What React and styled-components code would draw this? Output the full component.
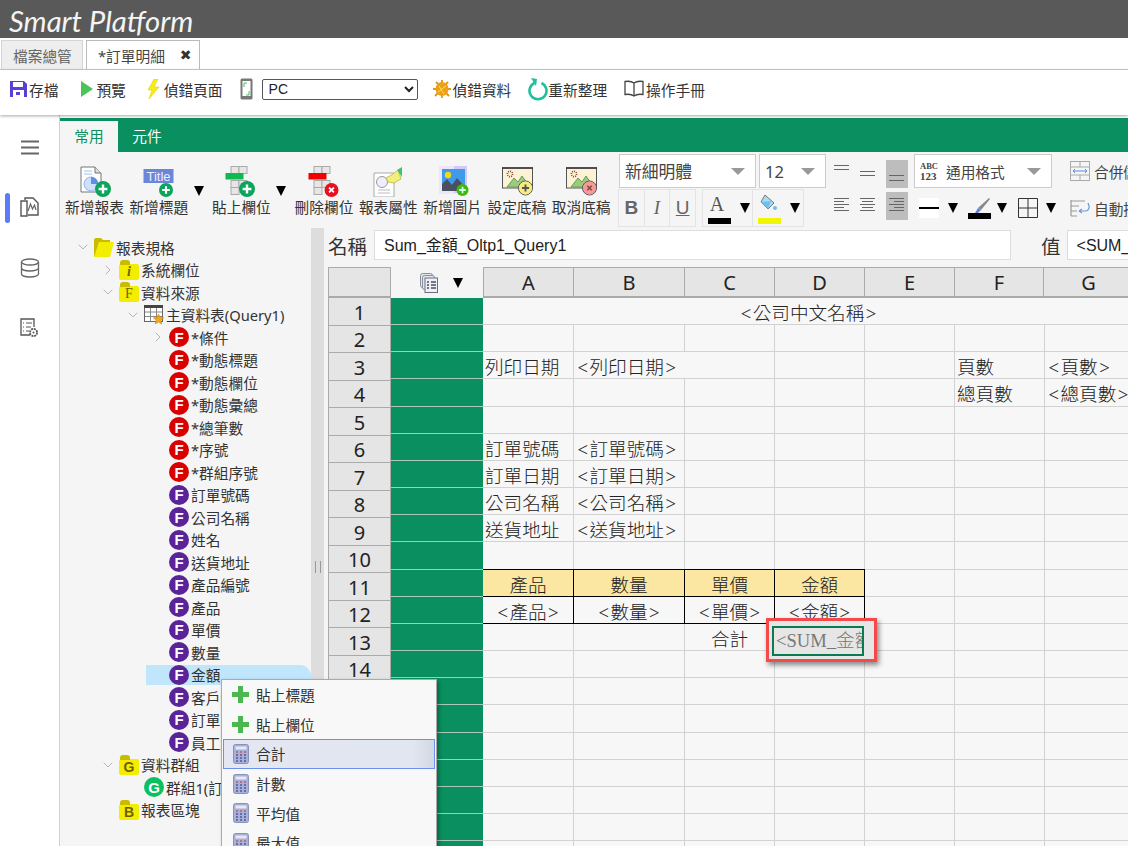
import React from "react";
import styled, { createGlobalStyle } from "styled-components";
import { ChevronDown, ChevronRight } from "lucide-react";

const UI_FONT = `"Noto Sans", "Noto Sans CJK TC", sans-serif`;
const CELL_FONT = `"Liberation Serif", "Noto Sans CJK TC", serif`;
const GREEN = "#0a9060";

const GlobalStyle = createGlobalStyle`
  html, body { margin: 0; padding: 0; background: #fff; }
  body { font-family: ${UI_FONT}; color: #222; }
  * { box-sizing: border-box; }
`;

const Page = styled.div`
  width: 1128px;
  height: 846px;
  display: flex;
  flex-direction: column;
  overflow: hidden;
`;

const Header = styled.div`
  height: 38px;
  flex: none;
  background: #595959;
  padding-left: 9px;
  color: #f4f4f4;
  font: italic 400 29.3px/41px "Lato", sans-serif;
`;

const TabBar = styled.div`
  height: 32px;
  flex: none;
  display: flex;
  align-items: flex-end;
  gap: 3px;
  padding: 0 0 0 1px;
  border-bottom: 1px solid #ccc;
`;

const FileTab = styled.div`
  height: 29px;
  width: ${(p) => p.$w}px;
  display: flex;
  align-items: center;
  padding-left: 11px;
  font-size: 14.7px;
  color: ${(p) => (p.$active ? "#444" : "#666")};
  background: ${(p) => (p.$active ? "#fff" : "#eee")};
  border: 1px solid ${(p) => (p.$active ? "#bbb" : "#d4d4d4")};
  border-bottom: 0;
`;

const CloseMark = styled.span`
  margin-left: 15px;
  font-size: 14px;
  color: #333;
  font-family: "DejaVu Sans", sans-serif;
`;

const Toolbar = styled.div`
  height: 45px;
  flex: none;
  display: flex;
  align-items: center;
  padding: 0 0 7px 10px;
  background: #fff;
  box-shadow: 0 1px 3px rgba(0, 0, 0, 0.35);
  position: relative;
  z-index: 2;
`;

const ToolButton = styled.div`
  display: flex;
  align-items: center;
  gap: ${(p) => p.$gap ?? 2}px;
  margin-left: ${(p) => p.$ml ?? 0}px;
  font-size: 14.7px;
  color: #333;
  white-space: nowrap;
`;

const DeviceSelect = styled.select`
  width: 156px;
  height: 21px;
  margin-left: 9px;
  border: 1px solid #555;
  border-radius: 2px;
  background: #fff;
  padding-left: 2px;
  font: 14px "Liberation Sans", sans-serif;
  color: #222;
`;

const Body = styled.div`
  flex: 1;
  min-height: 0;
  display: flex;
  position: relative;
  overflow: hidden;
`;

const Rail = styled.div`
  width: 60px;
  flex: none;
  border-right: 1px solid #d0d0d0;
  background: #fff;
  display: flex;
  flex-direction: column;
  align-items: center;
  padding: 25px 0 0 0;
  position: relative;
`;

const RailSlot = styled.div`
  width: 59px;
  height: ${(p) => p.$h}px;
  display: flex;
  justify-content: center;
  padding-left: ${(p) => p.$pl ?? 0}px;
  position: relative;
`;

const RailMarker = styled.div`
  position: absolute;
  left: 5px;
  top: -4px;
  width: 5px;
  height: 30px;
  border-radius: 3px;
  background: #5b7cfa;
`;

const Main = styled.div`
  flex: 1;
  min-width: 0;
  display: flex;
  flex-direction: column;
  padding-top: 3px;
  background: #fff;
`;

const RibbonTabs = styled.div`
  height: 34px;
  flex: none;
  display: flex;
  align-items: flex-end;
  background: ${GREEN};
`;

const RibbonTab = styled.div`
  width: 58px;
  height: 31px;
  display: flex;
  align-items: center;
  justify-content: center;
  padding-bottom: 2px;
  font-size: 14.7px;
  color: ${(p) => (p.$active ? GREEN : "#fff")};
  background: ${(p) => (p.$active ? "#f5f5f5" : "transparent")};
`;

const Ribbon = styled.div`
  height: 77px;
  flex: none;
  display: flex;
  gap: 5.3px;
  padding-left: 5px;
  background: #f5f5f5;
  overflow: hidden;
`;

const BigButton = styled.div`
  width: 59px;
  flex: none;
  display: flex;
  flex-direction: column;
  align-items: center;
  padding-top: 13px;
  font-size: 14.7px;
  line-height: 20px;
  white-space: nowrap;
  color: #333;
  svg { display: block; height: 32px; }
`;

const Caret = styled.span`
  flex: none;
  display: inline-block;
  width: 0;
  height: 0;
  border-left: 5px solid transparent;
  border-right: 5px solid transparent;
  border-top: 10px solid #000;
  margin-top: ${(p) => p.$mt ?? 0}px;
  margin-left: ${(p) => p.$ml ?? 0}px;
  margin-right: ${(p) => p.$mr ?? 0}px;
`;

const FormatPanel = styled.div`
  flex: none;
  margin-left: 2px;
  padding-top: 2px;
  display: flex;
  flex-direction: column;
  gap: 1px;
`;

const FormatRow = styled.div`
  height: ${(p) => p.$h}px;
  display: flex;
  align-items: center;
`;

const Combo = styled.div`
  width: ${(p) => p.$w}px;
  height: 34px;
  margin-left: ${(p) => p.$ml ?? 0}px;
  flex: none;
  display: flex;
  align-items: center;
  padding: 0 10px 0 5px;
  gap: 8px;
  background: #fff;
  border: 1px solid #ccc;
  font-size: ${(p) => p.$size ?? 14.7}px;
  color: #444;
`;

const ComboArrow = styled.span`
  margin-left: auto;
  width: 0;
  height: 0;
  border-left: 7px solid transparent;
  border-right: 7px solid transparent;
  border-top: 7px solid #999;
`;

const AlignGroup = styled.div`
  width: 74px;
  margin-left: ${(p) => p.$ml ?? 0}px;
  margin-top: ${(p) => p.$mt ?? 0}px;
  flex: none;
  display: flex;
  align-items: center;
  justify-content: space-between;
`;

const AlignButton = styled.div`
  width: ${(p) => (p.$on ? 22 : 16)}px;
  height: 28px;
  display: flex;
  align-items: center;
  justify-content: center;
  background: ${(p) => (p.$on ? "#bdbdbd" : "transparent")};
`;

const StyleGroup = styled.div`
  display: flex;
  height: 38px;
  flex: none;
  width: ${(p) => p.$w}px;
  margin-left: ${(p) => p.$ml ?? 0}px;
  border: 1px solid #e4e4e4;
`;

const StyleButton = styled.div`
  flex: 1;
  display: flex;
  align-items: center;
  justify-content: ${(p) => (p.$split ? "flex-start" : "center")};
  padding-left: ${(p) => (p.$split ? 5 : 0)}px;
  border-left: ${(p) => (p.$first ? "0" : "1px solid #e4e4e4")};
  color: #666;
  font-size: 19px;
  font-family: ${(p) => (p.$italic ? `"Liberation Serif", serif` : `"Liberation Sans", sans-serif`)};
  font-weight: ${(p) => (p.$bold ? 700 : 400)};
  font-style: ${(p) => (p.$italic ? "italic" : "normal")};
  text-decoration: ${(p) => (p.$under ? "underline" : "none")};
`;

const Swatch = styled.div`
  position: relative;
  width: 24px;
  height: 30px;
  margin-top: 2px;
  flex: none;
  &::after {
    content: "";
    position: absolute;
    left: 0;
    bottom: 0;
    width: 23px;
    height: 6px;
    background: ${(p) => p.$color};
  }
`;

const SwatchLetter = styled.span`
  display: block;
  text-align: center;
  width: 18px;
  margin-top: -2px;
  font: 20px/24px "Liberation Serif", serif;
  color: #555;
`;

const SideAction = styled.div`
  display: flex;
  align-items: center;
  gap: 4px;
  margin-left: ${(p) => p.$ml}px;
  font-size: 14.7px;
  white-space: nowrap;
  color: #444;
`;

const Workspace = styled.div`
  flex: 1;
  min-height: 0;
  display: flex;
  background: #f5f5f5;
`;

const Tree = styled.div`
  width: 251px;
  flex: none;
  padding-top: 7px;
  overflow: hidden;
`;

const TreeRow = styled.div`
  height: 22.5px;
  display: flex;
  align-items: center;
  margin-left: ${(p) => 11 + p.$level * 25}px;
  font-size: 14.7px;
  color: #333;
  white-space: nowrap;
  position: relative;
  &::before {
    content: "";
    display: ${(p) => (p.$selected ? "block" : "none")};
    position: absolute;
    left: 0;
    right: 0;
    top: 1px;
    bottom: 1px;
    background: #c0e6fb;
    border-top-right-radius: 11px;
  }
`;

const TreeToggle = styled.span`
  width: 23px;
  flex: none;
  display: flex;
  justify-content: center;
  color: #aaa;
  position: relative;
`;

const TreeLabel = styled.span`
  margin-left: 2px;
  position: relative;
`;

const Dot = styled.span`
  width: 20px;
  height: 20px;
  flex: none;
  border-radius: 50%;
  background: ${(p) => p.$color};
  color: #fff;
  display: flex;
  align-items: center;
  justify-content: center;
  font: 700 15px "Liberation Sans", sans-serif;
  position: relative;
`;

const Folder = styled.span`
  width: 20px;
  height: 16px;
  margin-top: 4px;
  flex: none;
  position: relative;
  border-radius: 2px;
  background: #f3ee00;
  color: #6e6000;
  display: flex;
  align-items: center;
  justify-content: center;
  font: ${(p) => (p.$serif ? `${p.$italic ? "italic 700" : "400"} 14px "Liberation Serif", serif` : `700 14px "Liberation Sans", sans-serif`)};
  &::before {
    content: "";
    position: absolute;
    left: 1px;
    top: -4px;
    width: 10px;
    height: 5px;
    border-radius: 3px 3px 0 0;
    background: #c9bb00;
  }
`;

const Splitter = styled.div`
  width: 13px;
  flex: none;
  margin-top: -1px;
  background: #ddd;
  padding: 333px 0 0 4px;
`;

const Grip = styled.div`
  width: 6px;
  height: 12px;
  border-left: 1px solid #999;
  border-right: 1px solid #999;
`;

const Content = styled.div`
  flex: 1;
  min-width: 0;
  padding: 1px 0 0 4px;
  display: flex;
  flex-direction: column;
  overflow: hidden;
`;

const NameRow = styled.div`
  height: 30px;
  flex: none;
  display: flex;
  align-items: center;
  font-size: 19.5px;
  color: #333;
`;

const FieldInput = styled.div`
  height: 30px;
  width: ${(p) => p.$w}px;
  margin-left: ${(p) => p.$ml}px;
  flex: none;
  display: flex;
  align-items: center;
  padding: 0 0 2px 9px;
  background: #fff;
  border: 1px solid #ddd;
  font: 16px "Liberation Sans", "Noto Sans CJK TC", sans-serif;
  color: #222;
  white-space: nowrap;
  overflow: hidden;
`;

const FieldLabel = styled.span`
  margin-left: ${(p) => p.$ml ?? 0}px;
  white-space: nowrap;
`;

const SheetArea = styled.div`
  margin-top: 7px;
  display: flex;
  flex: 1;
  min-height: 0;
`;

const RowHeads = styled.div`
  width: 63px;
  flex: none;
`;

const Corner = styled.div`
  height: 31px;
  background: #e5e5e5;
  border: 1px solid #aaa;
  border-bottom-width: 2px;
`;

const RowHead = styled.div`
  height: 27.5px;
  display: flex;
  align-items: center;
  justify-content: center;
  padding-top: 2px;
  background: #e5e5e5;
  border: 1px solid #aaa;
  border-top: 0;
  font-size: 20px;
  color: #222;
`;

const BandColumn = styled.div`
  width: 92px;
  flex: none;
`;

const BandHead = styled.div`
  height: 31px;
  display: flex;
  align-items: center;
  padding-left: 29px;
  gap: 15px;
`;

const BandCell = styled.div`
  height: 27.17px;
  background: ${GREEN};
  border-bottom: 1px solid #a9c9b9;
`;

const SheetColumn = styled.div`
  flex: 1;
  min-width: 0;
  position: relative;
  overflow: hidden;
`;

const ColHeads = styled.div`
  height: 31px;
  display: grid;
  grid-template-columns: 91px 111px 90px 90px 90px 89px 90px;
  width: 660px;
`;

const ColHead = styled.div`
  display: flex;
  align-items: center;
  justify-content: center;
  background: #e5e5e5;
  border-top: 1px solid #aaa;
  border-right: 1px solid #aaa;
  border-bottom: 2px solid #aaa;
  border-left: ${(p) => (p.$first ? "1px solid #aaa" : "0")};
  font-size: 20px;
  color: #222;
`;

const SheetGrid = styled.div`
  display: grid;
  grid-template-columns: 91px 111px 90px 90px 90px 90px 90px;
  grid-auto-rows: 27.17px;
  width: 662px;
  background: #f7f7f7;
  font: 300 18.6px/24px ${CELL_FONT};
  color: #222;
`;

const Cell = styled.div`
  grid-column: span ${(p) => p.$span ?? 1};
  padding: 4px 2px 0;
  text-align: ${(p) => p.$align ?? "left"};
  white-space: nowrap;
  overflow: hidden;
  border-right: 1px solid #d2d2d2;
  border-bottom: 1px solid #d2d2d2;
`;

const BoxedCell = styled(Cell)`
  text-align: center;
  background: ${(p) => p.$fill ?? "transparent"};
  border-right-color: #000;
  border-bottom-color: #000;
  box-shadow: -1px 0 0 #000, 0 -1px 0 #000;
`;

const Angle = styled.span`
  margin: 0 1.5px;
`;

const Callout = styled.div`
  position: absolute;
  left: 283px;
  top: 351px;
  width: 111px;
  height: 44px;
  padding: 5px 0 0 3px;
  background: #e6e6e6;
  border: 3px solid #f54a4a;
  box-shadow: 2px 3px 5px rgba(0, 0, 0, 0.45);
`;

const ActiveCell = styled.div`
  width: 92px;
  height: 30px;
  padding-left: 2px;
  border: 2px solid #0b7a50;
  overflow: hidden;
  white-space: nowrap;
  font: 300 18.6px/25px ${CELL_FONT};
  color: #777;
`;

const ContextMenu = styled.div`
  position: absolute;
  left: 221px;
  top: 564px;
  width: 216px;
  height: 320px;
  padding: 0 1px;
  background: #f8f8f8;
  border: 1px solid #aaa;
  box-shadow: 2px 2px 4px rgba(0, 0, 0, 0.3);
  z-index: 3;
`;

const MenuItem = styled.div`
  height: 29.6px;
  display: flex;
  align-items: center;
  gap: 7px;
  padding-left: 8px;
  font-size: 14.7px;
  color: #333;
  border: 1px solid ${(p) => (p.$active ? "#6c8ff0" : "transparent")};
  background: ${(p) =>
    p.$active ? "linear-gradient(90deg, #e4e7f1, #e2e6f0 90%, #d4d8e4)" : "transparent"};
`;

const MenuIconBox = styled.span`
  width: 17px;
  flex: none;
  display: flex;
  justify-content: center;
`;

const Badge = ({ cx, cy, r, fill, mark = "plus", color = "#fff" }) => (
  <g>
    <circle cx={cx} cy={cy} r={r} fill={fill} />
    {mark === "plus" ? (
      <path
        d={`M${cx - r * 0.55} ${cy}H${cx + r * 0.55}M${cx} ${cy - r * 0.55}V${cy + r * 0.55}`}
        stroke={color}
        strokeWidth={r * 0.3}
      />
    ) : (
      <path
        d={`M${cx - r * 0.35} ${cy - r * 0.35}L${cx + r * 0.35} ${cy + r * 0.35}M${cx + r * 0.35} ${cy - r * 0.35}L${cx - r * 0.35} ${cy + r * 0.35}`}
        stroke={color}
        strokeWidth={r * 0.25}
      />
    )}
  </g>
);

const Svg = ({ w = 36, h = 32, children }) => (
  <svg width={w} height={h} viewBox={`0 0 ${w} ${h}`} fill="none">
    {children}
  </svg>
);

const ReportIcon = () => (
  <Svg>
    <path d="M4 2h14l6 6v19H4z" fill="#fff" stroke="#777" />
    <path d="M18 2v6h6" stroke="#777" fill="#ddd" />
    <path d="M7 6h8M7 9h8" stroke="#9ec2f0" />
    <circle cx="14" cy="19" r="7" fill="#cfe0fa" stroke="#8fb2ea" />
    <path d="M14 19v-7a7 7 0 0 1 7 7z" fill="#5b8fe8" />
    <Badge cx={26} cy={24} r={8} fill="#0aa55a" />
  </Svg>
);

const TitleIcon = () => (
  <Svg>
    <rect x="2.5" y="4" width="30" height="14" fill="#6a86d8" />
    <text x="17.5" y="16" textAnchor="middle" fill="#eef" fontSize="13" fontFamily="Liberation Sans">
      Title
    </text>
    <Badge cx={25} cy={25} r={7} fill="#0aa55a" />
  </Svg>
);

const ColumnIcon = ({ bar, badge, mark, r = 8, cx = 24, cy = 24 }) => (
  <Svg>
    <g stroke="#aaa" fill="#e6e6e6">
      <rect x="8" y="1.5" width="8" height="7" />
      <rect x="16" y="1.5" width="8" height="7" />
      <rect x="8" y="15.5" width="8" height="7" />
      <rect x="8" y="22.5" width="8" height="7" />
      <rect x="16" y="15.5" width="8" height="7" />
    </g>
    <rect x="2.5" y="8" width="18" height="6.5" fill={bar} />
    <Badge cx={cx} cy={cy} r={r} fill={badge} mark={mark} />
  </Svg>
);

const PropsIcon = () => (
  <Svg>
    <path d="M4 8h20v24H4z" fill="#fff" stroke="#aaa" />
    <circle cx="12" cy="17" r="5.5" fill="#eef" stroke="#999" />
    <path d="M8 25h12M8 28h12" stroke="#bbb" />
    <path d="M16 13l7-4 5-4 3 9-7 4-6-1z" fill="#f2ee7c" stroke="#b6ac3c" strokeWidth=".7" />
    <path d="M27 5l5-3v10z" fill="#3fc46a" />
  </Svg>
);

const PictureIcon = () => (
  <Svg>
    <rect x="4" y="1" width="28" height="28" fill="#ece6fc" />
    <rect x="19" y="1" width="13" height="27" fill="#d2c8fa" />
    <rect x="7" y="4" width="23" height="22" fill="#3f9bea" />
    <circle cx="13" cy="10" r="3.2" fill="#f5d90a" />
    <path d="M7 26v-7l5-5 5 6 5-7 8 9v4z" fill="#4a5060" />
    <Badge cx={27.5} cy={25} r={6} fill="#42b80e" color="#cfe" />
  </Svg>
);

const DraftIcon = ({ fill, mark, color }) => (
  <Svg>
    <rect x="3.5" y="3" width="30" height="20" fill="#fdf1d6" stroke="#555" />
    <path d="M3 3h31" stroke="#333" strokeWidth="1.5" />
    <path d="M8 22l7-9 4 4 4-6 8 11z" fill="#9ccb7c" stroke="#6d9a58" />
    <circle cx="11" cy="9" r="2.6" stroke="#8a4a3c" strokeWidth="1.6" strokeDasharray="1 1" />
    <circle cx="26.5" cy="23" r="7" fill={fill} stroke="#555" />
    <Badge cx={26.5} cy={23} r={6.4} fill={fill} mark={mark} color={color} />
  </Svg>
);

const SaveIcon = () => (
  <Svg w={17} h={18}>
    <path d="M0 1h14l3 3v13H0z" fill="#5a3fd6" />
    <rect x="3" y="2" width="10" height="5" fill="#fff" />
    <rect x="3" y="10" width="11" height="7" fill="#fff" />
    <rect x="6" y="12" width="4" height="3" fill="#5a3fd6" />
  </Svg>
);

const PlayIcon = () => (
  <Svg w={12} h={18}>
    <path d="M0 1l12 8-12 8z" fill="#4cc25a" />
  </Svg>
);

const BoltIcon = () => (
  <Svg w={13} h={20}>
    <path d="M7 0L1 11h4L2 20l10-12H7l4-8z" fill="#f7ec13" stroke="#d9c900" strokeWidth=".5" />
  </Svg>
);

const DeviceIcon = () => (
  <Svg w={13} h={22}>
    <rect x="0.5" y="0.5" width="12" height="21" rx="1.5" fill="#777" />
    <rect x="2.5" y="3" width="8" height="15" fill="#fff" />
    <path d="M4 9V5h3M9 13v4H6" stroke="#46c05a" />
  </Svg>
);

const BugIcon = () => (
  <Svg w={18} h={20}>
    <path
      d="M9 1v3M3 3l3 3M15 3l-3 3M0 10h3M15 10h3M2 17l3-3M16 17l-3-3M9 16v3"
      stroke="#e09810"
      strokeWidth="1.8"
    />
    <ellipse cx="9" cy="10" rx="6.5" ry="7" fill="#ee9f18" />
    <path d="M5 13l8-6M6 7l5 8" stroke="#fbe15a" />
  </Svg>
);

const RefreshIcon = () => (
  <Svg w={20} h={24}>
    <path d="M6.5 6a8.5 8.5 0 1 0 7 0" stroke="#1fbf9f" strokeWidth="2.6" />
    <path d="M3 1l6 1-1 7z" fill="#1fbf9f" />
  </Svg>
);

const BookIcon = () => (
  <Svg w={20} h={18}>
    <path d="M10 3C8 1.5 4 1 1 1.5v13c3-.5 7 0 9 1.5 2-1.5 6-2 9-1.5v-13C16 1 12 1.5 10 3zM10 3v13" stroke="#444" strokeWidth="1.3" />
  </Svg>
);

const RailReport = () => (
  <Svg w={20} h={20}>
    <path d="M5 3V1h8l5 5v12H8" fill="#fff" stroke="#555" strokeWidth="1.4" />
    <path d="M1 4h6v15H1z" fill="#fff" stroke="#555" strokeWidth="1.4" />
    <path d="M8 14l2.5-7 2 5 2-4 1.5 5" stroke="#666" strokeWidth="1.2" />
  </Svg>
);

const RailData = () => (
  <Svg w={20} h={20}>
    <ellipse cx="10" cy="4" rx="8.5" ry="3" stroke="#666" strokeWidth="1.3" />
    <path d="M1.5 4v12c0 1.7 3.8 3 8.5 3s8.5-1.3 8.5-3V4M1.5 10c0 1.7 3.8 3 8.5 3s8.5-1.3 8.5-3" stroke="#666" strokeWidth="1.3" />
  </Svg>
);

const RailConfig = () => (
  <Svg w={19} h={20}>
    <path d="M10 17H1V1h13v8" stroke="#555" strokeWidth="1.3" />
    <path d="M3 5h1M6 5h6M3 9h1M6 9h5M3 13h1M6 13h3" stroke="#555" />
    <circle cx="13.5" cy="14.5" r="3.6" stroke="#555" strokeWidth="1.8" strokeDasharray="2 .8" />
    <circle cx="13.5" cy="14.5" r="1" fill="#555" />
  </Svg>
);

const MenuBars = () => (
  <Svg w={18} h={15}>
    <path d="M0 1.5h18M0 7.5h18M0 13.5h18" stroke="#666" strokeWidth="2.2" />
  </Svg>
);

const LineStack = ({ lines, w = 16, h = 18 }) => (
  <Svg w={w} h={h}>
    {lines.map(([y, x1, x2]) => (
      <path key={y} d={`M${x1} ${y}.5H${x2}`} stroke="#666" />
    ))}
  </Svg>
);

const ALIGN_LEFT = [[1, 0, 15], [4, 0, 10], [7, 0, 15], [10, 0, 10], [13, 0, 15]];
const ALIGN_CENTER = [[1, 0, 15], [4, 2, 13], [7, 0, 15], [10, 2, 13], [13, 0, 15]];
const ALIGN_RIGHT = [[1, 0, 15], [4, 5, 15], [7, 0, 15], [10, 5, 15], [13, 0, 15]];

const NumberFormatIcon = () => (
  <Svg w={18} h={22}>
    <text x="0" y="9" fontSize="8.5" fontWeight="700" fontFamily="Liberation Serif" fill="#444">
      ABC
    </text>
    <text x="0" y="20" fontSize="11" fontWeight="700" fontFamily="Liberation Serif" fill="#444">
      123
    </text>
  </Svg>
);

const MergeIcon = () => (
  <Svg w={20} h={20}>
    <rect x="0.5" y="0.5" width="19" height="19" fill="#f5f5f5" stroke="#aaa" />
    <path d="M1 6h18M1 14h18M10 1v5M10 14v5" stroke="#aaa" />
    <path d="M3 10h14M3 10l2-2M3 10l2 2M17 10l-2-2M17 10l-2 2" stroke="#5a8fd8" />
  </Svg>
);

const WrapIcon = () => (
  <Svg w={20} h={18}>
    <path d="M1 2h14M1 7h8M1 12h6M1 17h6M1 1v16" stroke="#999" strokeWidth="1.2" />
    <path d="M9 12h6a4 4 0 0 0 4-5l-1-3M9 12l3-2M9 12l3 2" stroke="#6a9ad8" strokeWidth="1.2" />
  </Svg>
);

const FillIcon = () => (
  <Svg w={20} h={18}>
    <path d="M7 1l9 8-6 6-7-7z" fill="#a8dcf6" stroke="#777" />
    <path d="M3 8l10-1-3 8z" fill="#6cc0ee" />
    <circle cx="17" cy="14" r="2" fill="#6cc0ee" />
  </Svg>
);

const BorderLineIcon = () => (
  <Svg w={20} h={20}>
    <rect width="20" height="20" fill="#fff" />
    <path d="M0 10h20" stroke="#000" strokeWidth="2" />
  </Svg>
);

const PenIcon = () => (
  <Svg w={23} h={21}>
    <path d="M21 0l1 1-9 11-3-2z" fill="#888" />
    <path d="M10 10l3 2-3 3H7z" fill="#5a86d8" />
    <rect y="15" width="23" height="6" fill="#000" />
  </Svg>
);

const GridIcon = () => (
  <Svg w={20} h={20}>
    <path d="M.5.5h19v19H.5zM10 1v18M1 10h18" stroke="#333" />
  </Svg>
);

const SheetsIcon = () => (
  <Svg w={18} h={20}>
    <rect x="0.5" y="0.5" width="12" height="14" rx="2" fill="#e4e6ee" stroke="#8a8e9e" />
    <rect x="2.5" y="2.5" width="12" height="14" rx="2" fill="#e4e6ee" stroke="#8a8e9e" />
    <rect x="5" y="5" width="12.5" height="14.5" fill="#eef0f6" stroke="#6a6e80" />
    <path d="M7 9h2M11 9h5M7 12h2M11 12h5M7 15h2M11 15h5" stroke="#4a4e60" strokeWidth="1.4" />
  </Svg>
);

const OpenFolderIcon = () => (
  <Svg w={20} h={20}>
    <path d="M0 3a2 2 0 0 1 2-2h5l2 2h7v3H5L2 19H0z" fill="#c9bb00" />
    <path d="M5 5h15l-4 15H0z" fill="#f3ee00" />
  </Svg>
);

const TableIcon = () => (
  <Svg w={20} h={20}>
    <rect x="0.5" y="0.5" width="18" height="16" fill="#fff" stroke="#666" />
    <rect x="0" y="0" width="19" height="3" fill="#444" />
    <path d="M6.5 3v13M12.5 3v13M1 7h17M1 11.500h17" stroke="#888" />
    <path d="M14.500 9l1.600 3.400 3.600.4-2.700 2.500.8 3.700-3.300-1.900-3.300 1.900.8-3.700-2.700-2.500 3.600-.4z" fill="#f0a81c" stroke="#b47a10" strokeWidth=".5" />
  </Svg>
);

const PlusIcon = () => (
  <Svg w={17} h={17}>
    <path d="M6 0h5v6h6v5h-6v6H6v-6H0V6h6z" fill="#4ab84e" />
  </Svg>
);

const CalcIcon = () => (
  <Svg w={16} h={20}>
    <rect x="0.5" y="0.5" width="15" height="19" rx="2" fill="#a8b0d8" stroke="#8a92bc" />
    <rect x="2.500" y="2.500" width="11" height="3" fill="#e6e8f4" />
    <path d="M3 8h2M7 8h2M11 8h2" stroke="#c05a6a" strokeWidth="1.500" />
    <path d="M3 11h2M7 11h2M11 11h2M3 14h2M7 14h2M11 14h2M3 17h2M7 17h2M11 17h2" stroke="#4a5a9c" strokeWidth="1.500" />
  </Svg>
);

const BIG_BUTTONS = [
  { label: "新增報表", icon: <ReportIcon /> },
  { label: "新增標題", icon: <TitleIcon />, caret: true },
  { label: "貼上欄位", icon: <ColumnIcon bar="#10b850" badge="#0aa55a" />, caret: true },
  { label: "刪除欄位", icon: <ColumnIcon bar="#f00000" badge="#e81020" mark="x" r={7} cx={25.5} cy={25} /> },
  { label: "報表屬性", icon: <PropsIcon /> },
  { label: "新增圖片", icon: <PictureIcon /> },
  { label: "設定底稿", icon: <DraftIcon fill="#f6ec80" color="#555" /> },
  { label: "取消底稿", icon: <DraftIcon fill="#f59a9a" mark="x" color="#844" /> },
];

const TREE = [
  { level: 0, text: "報表規格", toggle: "down", icon: "open" },
  { level: 1, text: "系統欄位", toggle: "right", folder: "i", serif: true, italic: true },
  { level: 1, text: "資料來源", toggle: "down", folder: "F", serif: true },
  { level: 2, text: "主資料表(Query1)", toggle: "down", icon: "table" },
  { level: 3, text: "*條件", toggle: "right", dot: "#d90000" },
  ...["*動態標題", "*動態欄位", "*動態彙總", "*總筆數", "*序號", "*群組序號"].map((text) => ({
    level: 3,
    text,
    dot: "#d90000",
  })),
  ...["訂單號碼", "公司名稱", "姓名", "送貨地址", "產品編號", "產品", "單價", "數量"].map((text) => ({
    level: 3,
    text,
    dot: "#5b2398",
  })),
  { level: 3, text: "金額", dot: "#5b2398", selected: true },
  ...["客戶編號", "訂單日期", "員工編號"].map((text) => ({ level: 3, text, dot: "#5b2398" })),
  { level: 1, text: "資料群組", toggle: "down", folder: "G" },
  { level: 2, text: "群組1(訂單編號)", dot: "#0cc060", letter: "G" },
  { level: 1, text: "報表區塊", folder: "B" },
];

const MENU = [
  { label: "貼上標題", icon: <PlusIcon /> },
  { label: "貼上欄位", icon: <PlusIcon /> },
  { label: "合計", icon: <CalcIcon />, active: true },
  { label: "計數", icon: <CalcIcon /> },
  { label: "平均值", icon: <CalcIcon /> },
  { label: "最大值", icon: <CalcIcon /> },
];

const blankRow = () => [{}, {}, {}, {}, {}, {}, {}];
const labelled = (a, b) => [{ t: a }, { t: b }, {}, {}, {}, {}, {}];

const SHEET = [
  [{ t: "<公司中文名稱>", span: 7, align: "center" }],
  blankRow(),
  [{ t: "列印日期" }, { t: "<列印日期>", span: 2 }, {}, {}, { t: "頁數" }, { t: "<頁數>" }],
  [{}, {}, {}, {}, {}, { t: "總頁數" }, { t: "<總頁數>" }],
  blankRow(),
  labelled("訂單號碼", "<訂單號碼>"),
  labelled("訂單日期", "<訂單日期>"),
  labelled("公司名稱", "<公司名稱>"),
  labelled("送貨地址", "<送貨地址>"),
  blankRow(),
  [
    { t: "產品", boxed: true, fill: "#fbe6a2" },
    { t: "數量", boxed: true, fill: "#fbe6a2" },
    { t: "單價", boxed: true, fill: "#fbe6a2" },
    { t: "金額", boxed: true, fill: "#fbe6a2" },
    {},
    {},
    {},
  ],
  [
    { t: "<產品>", boxed: true },
    { t: "<數量>", boxed: true },
    { t: "<單價>", boxed: true },
    { t: "<金額>", boxed: true },
    {},
    {},
    {},
  ],
  [{}, {}, { t: "合計", align: "center" }, {}, {}, {}, {}],
  ...Array.from({ length: 8 }, blankRow),
];

const ROW_NUMBERS = Array.from({ length: 14 }, (_, i) => i + 1);
const BAND_ROWS = Array.from({ length: 21 }, (_, i) => i);

// the angle brackets of the sheet's font are wider than Liberation Serif's
const cellText = (text) =>
  text?.split(/([<>])/).map((part, i) =>
    part === "<" || part === ">" ? <Angle key={i}>{part}</Angle> : part
  );

const TreeNode = ({ node }) => (
  <TreeRow $level={node.level} $selected={node.selected}>
    <TreeToggle>
      {node.toggle === "down" && <ChevronDown size={16} strokeWidth={1.3} />}
      {node.toggle === "right" && <ChevronRight size={16} strokeWidth={1.3} />}
    </TreeToggle>
    {node.icon === "open" && <OpenFolderIcon />}
    {node.icon === "table" && <TableIcon />}
    {node.folder && (
      <Folder $serif={node.serif} $italic={node.italic}>
        {node.folder}
      </Folder>
    )}
    {node.dot && <Dot $color={node.dot}>{node.letter ?? "F"}</Dot>}
    <TreeLabel>{node.text}</TreeLabel>
  </TreeRow>
);

const App = () => (
  <Page>
    <GlobalStyle />
    <Header>Smart Platform</Header>
    <TabBar>
      <FileTab $w={82}>檔案總管</FileTab>
      <FileTab $w={114} $active>
        *訂單明細<CloseMark>✖</CloseMark>
      </FileTab>
    </TabBar>
    <Toolbar>
      <ToolButton><SaveIcon />存檔</ToolButton>
      <ToolButton $ml={23} $gap={3}><PlayIcon />預覽</ToolButton>
      <ToolButton $ml={21} $gap={4}><BoltIcon />偵錯頁面</ToolButton>
      <ToolButton $ml={17}><DeviceIcon /></ToolButton>
      <DeviceSelect defaultValue="PC">
        <option>PC</option>
      </DeviceSelect>
      <ToolButton $ml={15}><BugIcon />偵錯資料</ToolButton>
      <ToolButton $ml={17} $gap={0}><RefreshIcon />重新整理</ToolButton>
      <ToolButton $ml={17} $gap={2}><BookIcon />操作手冊</ToolButton>
    </Toolbar>
    <Body>
      <Rail>
        <RailSlot $h={57}><MenuBars /></RailSlot>
        <RailSlot $h={61}>
          <RailMarker />
          <RailReport />
        </RailSlot>
        <RailSlot $h={60}><RailData /></RailSlot>
        <RailSlot $h={40}><RailConfig /></RailSlot>
      </Rail>
      <Main>
        <RibbonTabs>
          <RibbonTab $active>常用</RibbonTab>
          <RibbonTab>元件</RibbonTab>
        </RibbonTabs>
        <Ribbon>
          {BIG_BUTTONS.map((b) => (
            <React.Fragment key={b.label}>
              <BigButton>
                {b.icon}
                {b.label}
              </BigButton>
              {b.caret && <Caret $mt={34} $mr={3} />}
            </React.Fragment>
          ))}
          <FormatPanel>
            <FormatRow $h={34}>
              <Combo $w={137} $ml={1} $size={16.8}>新細明體<ComboArrow /></Combo>
              <Combo $w={67} $ml={3} $size={16.5}>12<ComboArrow /></Combo>
              <AlignGroup $ml={8} $mt={6}>
                <AlignButton><LineStack lines={[[0, 0, 15], [4, 0, 15]]} /></AlignButton>
                <AlignButton><LineStack lines={[[6, 0, 15], [10, 0, 15]]} /></AlignButton>
                <AlignButton $on><LineStack lines={[[10, 0, 15], [15, 0, 15]]} /></AlignButton>
              </AlignGroup>
              <Combo $w={138} $ml={6}><NumberFormatIcon />通用格式<ComboArrow /></Combo>
              <SideAction $ml={18}><MergeIcon />合併儲存格</SideAction>
            </FormatRow>
            <FormatRow $h={38}>
              <StyleGroup $w={78}>
                <StyleButton $first $bold>B</StyleButton>
                <StyleButton $italic>I</StyleButton>
                <StyleButton $under>U</StyleButton>
              </StyleGroup>
              <StyleGroup $w={102} $ml={6}>
                <StyleButton $first $split>
                  <Swatch $color="#000"><SwatchLetter>A</SwatchLetter></Swatch>
                  <Caret $ml={8} />
                </StyleButton>
                <StyleButton $split>
                  <Swatch $color="#f0f500"><FillIcon /></Swatch>
                  <Caret $ml={8} />
                </StyleButton>
              </StyleGroup>
              <AlignGroup $ml={30} $mt={-4}>
                <AlignButton><LineStack lines={ALIGN_LEFT} /></AlignButton>
                <AlignButton><LineStack lines={ALIGN_CENTER} /></AlignButton>
                <AlignButton $on><LineStack lines={ALIGN_RIGHT} /></AlignButton>
              </AlignGroup>
              <ToolButton $ml={11}><BorderLineIcon /></ToolButton>
              <Caret $ml={9} />
              <ToolButton $ml={10}><PenIcon /></ToolButton>
              <Caret $ml={6} />
              <ToolButton $ml={11}><GridIcon /></ToolButton>
              <Caret $ml={8} />
              <SideAction $ml={14}><WrapIcon />自動換行</SideAction>
            </FormatRow>
          </FormatPanel>
        </Ribbon>
        <Workspace>
          <Tree>
            {TREE.map((node) => (
              <TreeNode key={node.text} node={node} />
            ))}
          </Tree>
          <Splitter><Grip /></Splitter>
          <Content>
            <NameRow>
              <FieldLabel>名稱</FieldLabel>
              <FieldInput $w={637} $ml={7}>Sum_金額_Oltp1_Query1</FieldInput>
              <FieldLabel $ml={30}>值</FieldLabel>
              <FieldInput $w={120} $ml={6}>&lt;SUM_金額&gt;</FieldInput>
            </NameRow>
            <SheetArea>
              <RowHeads>
                <Corner />
                {ROW_NUMBERS.map((n) => (
                  <RowHead key={n}>{n}</RowHead>
                ))}
              </RowHeads>
              <BandColumn>
                <BandHead>
                  <SheetsIcon />
                  <Caret />
                </BandHead>
                {BAND_ROWS.map((n) => (
                  <BandCell key={n} />
                ))}
              </BandColumn>
              <SheetColumn>
                <ColHeads>
                  {["A", "B", "C", "D", "E", "F", "G"].map((c, i) => (
                    <ColHead key={c} $first={i === 0}>{c}</ColHead>
                  ))}
                </ColHeads>
                <SheetGrid>
                  {SHEET.flatMap((row, r) =>
                    row.map((c, i) =>
                      c.boxed ? (
                        <BoxedCell key={`${r}-${i}`} $fill={c.fill}>{cellText(c.t)}</BoxedCell>
                      ) : (
                        <Cell key={`${r}-${i}`} $span={c.span} $align={c.align}>{cellText(c.t)}</Cell>
                      )
                    )
                  )}
                </SheetGrid>
                <Callout>
                  <ActiveCell>&lt;SUM_金額&gt;</ActiveCell>
                </Callout>
              </SheetColumn>
            </SheetArea>
          </Content>
        </Workspace>
      </Main>
      <ContextMenu>
        {MENU.map((m) => (
          <MenuItem key={m.label} $active={m.active}>
            <MenuIconBox>{m.icon}</MenuIconBox>
            {m.label}
          </MenuItem>
        ))}
      </ContextMenu>
    </Body>
  </Page>
);

export default App;
